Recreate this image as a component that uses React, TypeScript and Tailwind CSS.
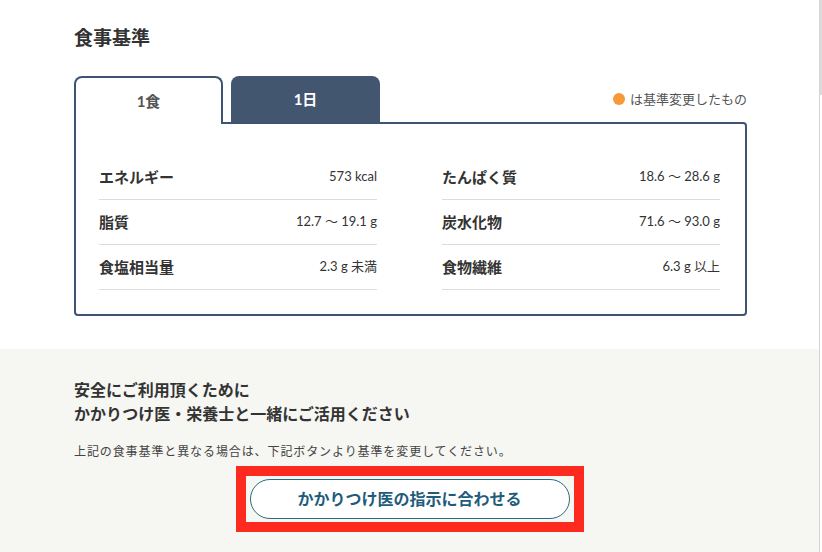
import React from 'react';

const rows = [
  [
    { label: 'エネルギー', value: '573 kcal' },
    { label: 'たんぱく質', value: '18.6 〜 28.6 g' },
  ],
  [
    { label: '脂質', value: '12.7 〜 19.1 g' },
    { label: '炭水化物', value: '71.6 〜 93.0 g' },
  ],
  [
    { label: '食塩相当量', value: '2.3 g 未満' },
    { label: '食物繊維', value: '6.3 g 以上' },
  ],
];

function Cell({ label, value }: { label: string; value: string }) {
  return (
    <div className="flex items-center justify-between h-[45px] border-b border-[#dcdcdc]">
      <span className="text-[15px] font-bold text-[#333]">{label}</span>
      <span className="text-[13px] text-[#333]">{value}</span>
    </div>
  );
}

export default function App() {
  return (
    <div
      className="flex w-[822px] h-[552px] overflow-hidden bg-white"
      style={{ fontFamily: '"Lato", "Noto Sans CJK JP", sans-serif' }}
    >
      <div className="w-[819px] flex flex-col">
        {/* 食事基準 */}
        <section className="bg-white pl-[74px] pr-[72px] pt-[24px] pb-[33px]">
          <h2 className="text-[19px] leading-[28px] font-bold text-[#333]">食事基準</h2>

          <div className="mt-[24px] flex items-end">
            <button className="relative z-10 -mb-[2px] h-[48px] w-[149px] rounded-t-lg border-2 border-b-0 border-[#3f5470] bg-white text-[15px] font-bold text-[#555]">
              1食
            </button>
            <button className="ml-[8px] h-[46px] w-[149px] rounded-t-lg bg-[#425670] text-[15px] font-bold text-white">
              1日
            </button>
            <div className="ml-auto mb-[15px] flex items-center gap-[5px] text-[13px] leading-[16px] text-[#555]">
              <span className="h-[12px] w-[12px] rounded-full bg-[#f7983a]" />
              <span>は基準変更したもの</span>
            </div>
          </div>

          <div className="rounded rounded-tl-none border-2 border-[#3f5470] pl-[23px] pr-[25px] pt-[31px] pb-[24px]">
            <div className="grid grid-cols-2 gap-x-[65px]">
              {rows.map((pair) =>
                pair.map((item) => <Cell key={item.label} label={item.label} value={item.value} />)
              )}
            </div>
          </div>
        </section>

        {/* 注意書き */}
        <section className="flex-1 bg-[#f6f6f2] px-[74px] pt-[29px]">
          <p className="text-[16px] leading-[24px] font-bold text-[#333]">
            安全にご利用頂くために
            <br />
            かかりつけ医・栄養士と一緒にご活用ください
          </p>
          <p className="mt-[17px] text-[12px] leading-[18px] tracking-[0.9px] text-[#444]">
            上記の食事基準と異なる場合は、下記ボタンより基準を変更してください。
          </p>
          <div className="mt-[5px] flex justify-center">
            <div className="border-[10px] border-[#fc2a1f] px-[4px] py-[3px]">
              <button className="h-[40px] w-[320px] rounded-full border border-[#2a6a86] bg-white text-[16px] font-bold text-[#1f5c7c]">
                かかりつけ医の指示に合わせる
              </button>
            </div>
          </div>
        </section>
      </div>

      {/* scrollbar */}
      <div className="relative w-[3px] border-l border-[#d4d4d4] bg-white">
        <div className="absolute left-0 top-0 h-[95px] w-[3px] bg-[#dcdcdc]" />
      </div>
    </div>
  );
}
